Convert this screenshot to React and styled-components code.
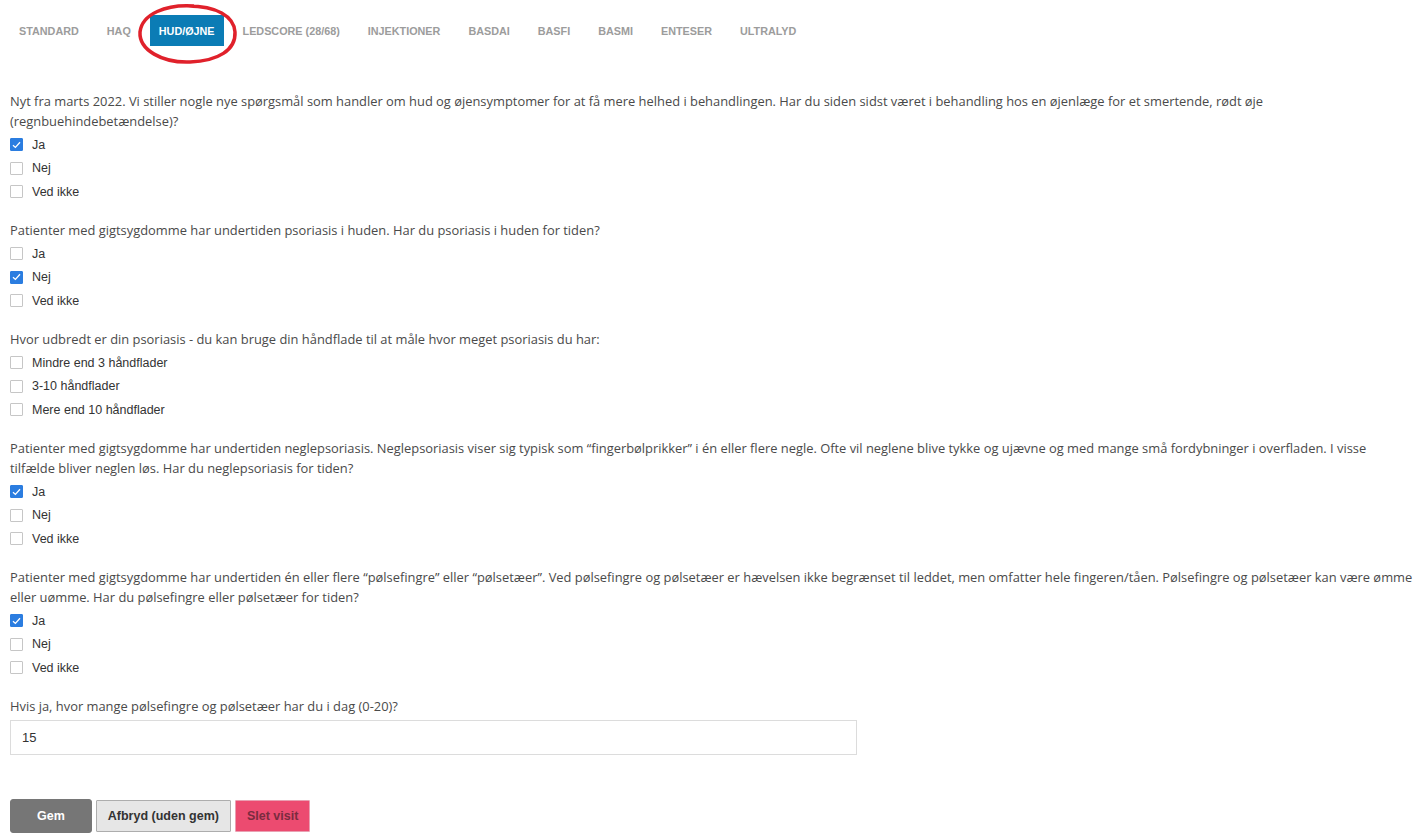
import React, { useState } from 'react';
import styled, { createGlobalStyle } from 'styled-components';

const GlobalStyle = createGlobalStyle`
  html, body {
    margin: 0;
    padding: 0;
    background: #fff;
  }
  body {
    font-family: "Liberation Sans", Arial, sans-serif;
    color: #333;
  }
`

const Page = styled.div`
  position: relative;
  padding: 0 10px;
`

const TabBar = styled.ul`
  list-style: none;
  margin: 0;
  padding: 15px 0 0 0;
  display: flex;
  gap: 10px;
`

const Tab = styled.li`
  height: 31px;
  padding: 0 9px;
  display: flex;
  align-items: center;
  font-family: "Liberation Sans", Arial, sans-serif;
  font-size: 10.8px;
  font-weight: bold;
  text-transform: uppercase;
  color: ${p => (p.active ? '#fff' : '#9c9c9c')};
  background: ${p => (p.active ? '#0b7cb5' : 'transparent')};
  cursor: pointer;
`

// the red hand-drawn ring around the active tab
const Ring = styled.svg`
  position: absolute;
  left: 136px;
  top: 2px;
  width: 104px;
  height: 64px;
  pointer-events: none;
`

const Form = styled.div`
  margin-top: 45px;
`

const Block = styled.div`
  margin-bottom: 16.5px;
`

const Question = styled.div`
  font-family: "Open Sans", "Noto Sans", sans-serif;
  font-size: 12.9px;
  line-height: 20px;
  color: #4a4a4a;
  white-space: nowrap;
  margin-bottom: ${p => (p.tight ? '4px' : '2px')};
`

const Option = styled.label`
  height: 23.5px;
  display: flex;
  align-items: center;
  gap: 9px;
  font-family: "Liberation Sans", Arial, sans-serif;
  font-size: 12.5px;
  color: #333;
  cursor: pointer;
`

const Box = styled.span`
  width: 13px;
  height: 13px;
  box-sizing: border-box;
  border: 1px solid ${p => (p.checked ? '#2b7de0' : '#c6c6c6')};
  background: ${p => (p.checked ? '#2b7de0' : '#fff')};
  border-radius: 1px;
  display: flex;
  align-items: center;
  justify-content: center;
`

const Input = styled.input`
  display: block;
  box-sizing: border-box;
  width: 847px;
  height: 35px;
  padding: 0 11px;
  border: 1px solid #dcdcdc;
  font-family: "Liberation Sans", Arial, sans-serif;
  font-size: 13px;
  color: #333;
  outline: none;
`

const Buttons = styled.div`
  display: flex;
  gap: 4px;
  margin-top: 44px;
  align-items: flex-start;
`

const Button = styled.button`
  box-sizing: border-box;
  height: ${p => (p.kind === 'primary' ? '34px' : '32px')};
  padding: 0 ${p => (p.kind === 'primary' ? '26px' : '11px')};
  font-family: "Liberation Sans", Arial, sans-serif;
  font-size: 12.5px;
  font-weight: bold;
  border-radius: ${p => (p.kind === 'primary' ? '3px' : '1px')};
  cursor: pointer;
  ${p => p.kind === 'primary' && `
    background: #767676;
    color: #fff;
    border: 1px solid #767676;
  `}
  ${p => p.kind === 'default' && `
    background: #e6e6e6;
    color: #333;
    border: 1px solid #adadad;
    margin-top: 1px;
  `}
  ${p => p.kind === 'danger' && `
    background: #ec4b70;
    color: #7a2c3f;
    border: 1px solid #e9a0b2;
    margin-top: 1px;
  `}
`

const Check = () => (
  <svg width="9" height="8" viewBox="0 0 9 8">
    <path d="M1 4.2 L3.4 6.4 L8 1.2" fill="none" stroke="#fff" strokeWidth="1.3" />
  </svg>
)

const tabs = ['Standard', 'HAQ', 'Hud/øjne', 'Ledscore (28/68)', 'Injektioner', 'BASDAI', 'BASFI', 'BASMI', 'Enteser', 'Ultralyd']

const questions = [
  {
    lines: [
      'Nyt fra marts 2022. Vi stiller nogle nye spørgsmål som handler om hud og øjensymptomer for at få mere helhed i behandlingen. Har du siden sidst været i behandling hos en øjenlæge for et smertende, rødt øje',
      '(regnbuehindebetændelse)?',
    ],
    options: ['Ja', 'Nej', 'Ved ikke'],
    checked: 'Ja',
  },
  {
    lines: ['Patienter med gigtsygdomme har undertiden psoriasis i huden. Har du psoriasis i huden for tiden?'],
    options: ['Ja', 'Nej', 'Ved ikke'],
    checked: 'Nej',
  },
  {
    lines: ['Hvor udbredt er din psoriasis - du kan bruge din håndflade til at måle hvor meget psoriasis du har:'],
    options: ['Mindre end 3 håndflader', '3-10 håndflader', 'Mere end 10 håndflader'],
    checked: null,
  },
  {
    lines: [
      'Patienter med gigtsygdomme har undertiden neglepsoriasis. Neglepsoriasis viser sig typisk som “fingerbølprikker” i én eller flere negle. Ofte vil neglene blive tykke og ujævne og med mange små fordybninger i overfladen. I visse',
      'tilfælde bliver neglen løs. Har du neglepsoriasis for tiden?',
    ],
    options: ['Ja', 'Nej', 'Ved ikke'],
    checked: 'Ja',
  },
  {
    lines: [
      'Patienter med gigtsygdomme har undertiden én eller flere “pølsefingre” eller “pølsetæer”. Ved pølsefingre og pølsetæer er hævelsen ikke begrænset til leddet, men omfatter hele fingeren/tåen. Pølsefingre og pølsetæer kan være ømme',
      'eller uømme. Har du pølsefingre eller pølsetæer for tiden?',
    ],
    options: ['Ja', 'Nej', 'Ved ikke'],
    checked: 'Ja',
  },
]

const App = () => {
  const [answers, setAnswers] = useState(questions.map(q => q.checked))
  const [count, setCount] = useState('15')

  const toggle = (qi, opt) => {
    const next = [...answers]
    next[qi] = next[qi] === opt ? null : opt
    setAnswers(next)
  }

  return (
    <Page>
      <GlobalStyle />
      <TabBar>
        {tabs.map(t => (
          <Tab key={t} active={t === 'Hud/øjne'}>{t}</Tab>
        ))}
      </TabBar>
      <Ring viewBox="0 0 104 64">
        <path
          d="M58 4 C 30 2, 6 12, 4 30 C 3 48, 26 61, 54 60 C 82 59, 100 48, 99 30 C 98 14, 80 4, 52 4"
          fill="none"
          stroke="#e0212b"
          strokeWidth="3.5"
        />
      </Ring>

      <Form>
        {questions.map((q, qi) => (
          <Block key={qi}>
            <Question>
              {q.lines.map((l, i) => (
                <div key={i}>{l}</div>
              ))}
            </Question>
            {q.options.map(o => (
              <Option key={o} onClick={() => toggle(qi, o)}>
                <Box checked={answers[qi] === o}>{answers[qi] === o && <Check />}</Box>
                {o}
              </Option>
            ))}
          </Block>
        ))}

        <Block>
          <Question tight>Hvis ja, hvor mange pølsefingre og pølsetæer har du i dag (0-20)?</Question>
          <Input value={count} onChange={e => setCount(e.target.value)} />
        </Block>

        <Buttons>
          <Button kind="primary">Gem</Button>
          <Button kind="default">Afbryd (uden gem)</Button>
          <Button kind="danger">Slet visit</Button>
        </Buttons>
      </Form>
    </Page>
  )
}

export default App;
